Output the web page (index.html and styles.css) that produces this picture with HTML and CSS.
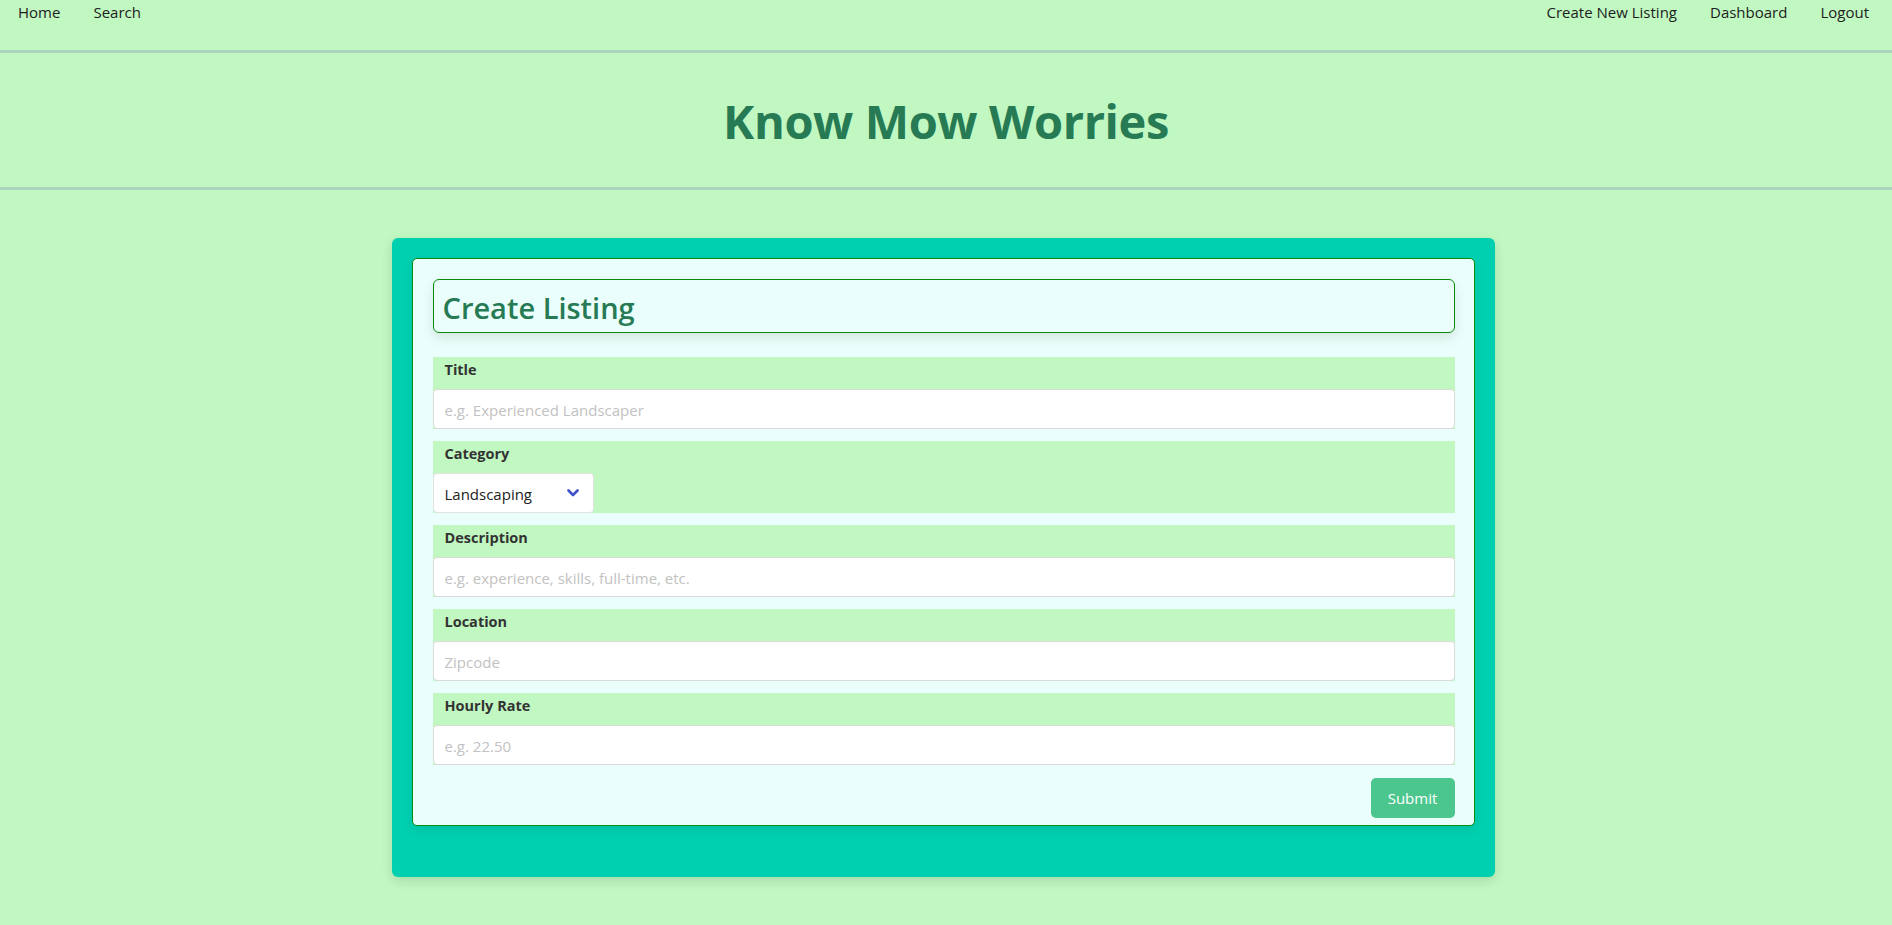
FILE: index.html
```html
<!DOCTYPE html>
<html lang="en">
<head>
<meta charset="utf-8">
<title>Know Mow Worries</title>
<link rel="stylesheet" href="styles.css">
</head>
<body>
<nav class="topnav">
  <div class="nav-group">
    <a class="nav-link" href="#">Home</a>
    <a class="nav-link" href="#">Search</a>
  </div>
  <div class="nav-group">
    <a class="nav-link" href="#">Create New Listing</a>
    <a class="nav-link" href="#">Dashboard</a>
    <a class="nav-link" href="#">Logout</a>
  </div>
</nav>
<header class="site-header">
  <h1 class="site-title">Know Mow Worries</h1>
</header>
<main class="page">
  <div class="outer-card">
    <div class="inner-card">
      <h2 class="form-title">Create Listing</h2>
      <form class="listing-form">
        <div class="field">
          <label class="field-label" for="title">Title</label>
          <input class="field-input" id="title" type="text" placeholder="e.g. Experienced Landscaper">
        </div>
        <div class="field">
          <label class="field-label" for="category">Category</label>
          <div class="select-wrap">
            <select class="field-select" id="category">
              <option>Landscaping</option>
            </select>
            <svg class="select-chevron" width="12" height="8" viewBox="0 0 12 8"><path d="M1.5 1.5 L6 6 L10.5 1.5" fill="none" stroke="#3f51c9" stroke-width="2.6" stroke-linecap="round" stroke-linejoin="round"/></svg>
          </div>
        </div>
        <div class="field">
          <label class="field-label" for="description">Description</label>
          <input class="field-input" id="description" type="text" placeholder="e.g. experience, skills, full-time, etc.">
        </div>
        <div class="field">
          <label class="field-label" for="location">Location</label>
          <input class="field-input" id="location" type="text" placeholder="Zipcode">
        </div>
        <div class="field">
          <label class="field-label" for="rate">Hourly Rate</label>
          <input class="field-input" id="rate" type="text" placeholder="e.g. 22.50">
        </div>
        <div class="form-actions">
          <button class="submit-btn" type="button">Submit</button>
        </div>
      </form>
    </div>
  </div>
</main>
</body>
</html>
```
FILE: styles.css
```css
* { box-sizing: border-box; }

body {
  margin: 0;
  background: #c1f7c1;
  font-family: "Open Sans", "Noto Sans", sans-serif;
  color: #222;
}

.topnav {
  display: flex;
  justify-content: space-between;
  height: 53px;
  padding: 1px 23px 0 18px;
  border-bottom: 3px solid #aed4c0;
}

.nav-group {
  display: flex;
  gap: 33px;
}

.nav-link {
  color: #1d1d1d;
  text-decoration: none;
  font-size: 15px;
  line-height: 22px;
}

.site-header {
  height: 137px;
  display: flex;
  align-items: center;
  justify-content: center;
  border-bottom: 3px solid #aed4c0;
}

.site-title {
  margin: 0;
  padding-top: 2px;
  font-size: 47px;
  font-weight: 700;
  color: #267a54;
  letter-spacing: -0.4px;
}

.page {
  padding: 48px 6px 60px 0;
}

.outer-card {
  width: 1103px;
  margin: 0 auto;
  background: #00d0b0;
  border-radius: 6px;
  padding: 20px 20px 51px 20px;
  box-shadow: 0 4px 12px rgba(0, 0, 0, 0.12);
}

.inner-card {
  background: #eafffb;
  border: 1px solid #0a8a0a;
  border-radius: 5px;
  padding: 20px 19px 7px 20px;
  box-shadow: 0 4px 12px rgba(0, 0, 0, 0.08);
}

.form-title {
  margin: 0 0 24px 0;
  height: 54px;
  display: flex;
  align-items: center;
  padding: 3px 9px 0 9px;
  border: 1px solid #0a8a0a;
  border-radius: 6px;
  font-size: 29px;
  font-weight: 600;
  color: #267a54;
  box-shadow: 0 5px 12px rgba(0, 0, 0, 0.1);
}

.listing-form {
  display: flex;
  flex-direction: column;
  gap: 12px;
}

.field {
  background: #c1f7c1;
  display: flex;
  flex-direction: column;
  align-items: flex-start;
}

.field-label {
  display: block;
  height: 32px;
  padding: 3px 12px 0 12px;
  font-size: 14.5px;
  font-weight: 700;
  line-height: 20px;
  color: #333;
}

.field-input {
  width: 100%;
  height: 40px;
  border: 1px solid #dadada;
  border-radius: 4px;
  background: #fff;
  padding: 1px 11px 0 11px;
  font-family: inherit;
  font-size: 15px;
  color: #333;
  outline: none;
}

.field-input::placeholder {
  color: #c2c2c2;
}

.select-wrap {
  position: relative;
  width: 161px;
}

.field-select {
  appearance: none;
  -webkit-appearance: none;
  width: 100%;
  height: 40px;
  border: 1px solid #e2e2e2;
  border-radius: 4px;
  background: #fff;
  padding: 1px 11px 0 11px;
  font-family: inherit;
  font-size: 15px;
  color: #222;
  outline: none;
}

.select-chevron {
  position: absolute;
  right: 15px;
  top: 16px;
  pointer-events: none;
}

.form-actions {
  display: flex;
  justify-content: flex-end;
  margin-top: 1px;
}

.submit-btn {
  width: 84px;
  height: 40px;
  border: none;
  border-radius: 5px;
  background: #4bc78e;
  color: #fff;
  font-family: inherit;
  font-size: 15px;
}
```
